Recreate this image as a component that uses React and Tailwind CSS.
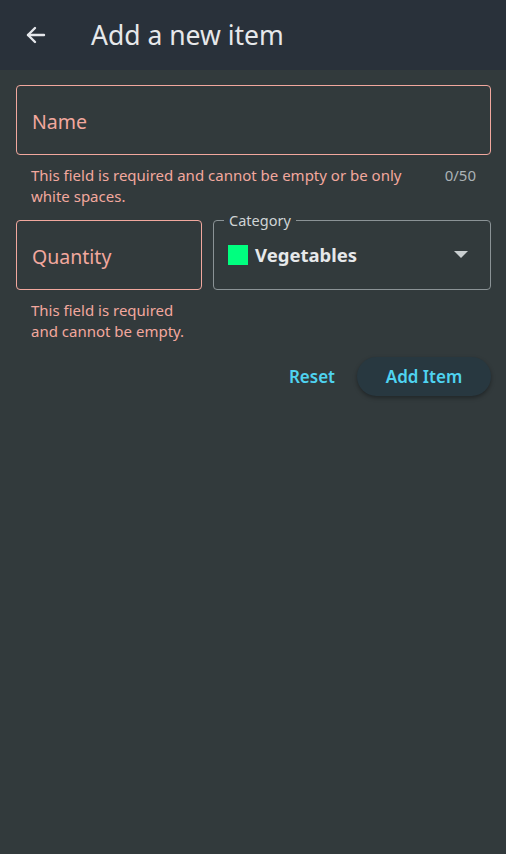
import React from "react";

function BackArrow() {
  return (
    <svg width="24" height="24" viewBox="0 0 24 24" fill="none" stroke="#e5e7eb" strokeWidth="2.4" strokeLinecap="round" strokeLinejoin="round">
      <path d="M20 12H4" />
      <path d="M11 5l-7 7 7 7" />
    </svg>
  );
}

export default function App() {
  return (
    <div
      className="min-h-screen w-full bg-[#323a3c] text-gray-100"
      style={{ fontFamily: '"Noto Sans", "Open Sans", sans-serif' }}
    >
      {/* Header */}
      <div className="h-[70px] bg-[#29313a] flex items-center px-6">
        <BackArrow />
        <h1 className="ml-[43px] pt-[2px] text-[26.5px] text-[#e6e8ea]">Add a new item</h1>
      </div>

      <div className="pl-4 pr-[15px] pt-[15px]">
        {/* Name */}
        <div className="h-[70px] border border-[#f2a89e] rounded-[4px] flex items-center px-[15px] pt-[4px]">
          <span className="text-[19.5px] text-[#f2a89e]">Name</span>
        </div>
        <div className="flex justify-between pl-[15px] pr-[15px] pt-[10px]">
          <p className="text-[15px] leading-[21px] text-[#f2a89e] max-w-[395px]">
            This field is required and cannot be empty or be only white spaces.
          </p>
          <span className="text-[15px] leading-[21px] text-[#aab2b6]">0/50</span>
        </div>

        {/* Quantity + Category */}
        <div className="flex gap-[11px] mt-[13px]">
          <div className="w-[186px] shrink-0">
            <div className="h-[70px] border border-[#f2a89e] rounded-[4px] flex items-center px-[15px] pt-[4px]">
              <span className="text-[19.5px] text-[#f2a89e]">Quantity</span>
            </div>
            <p className="pl-[15px] pr-[4px] pt-[10px] text-[15px] leading-[21px] text-[#f2a89e]">
              This field is required and cannot be empty.
            </p>
          </div>
          <div className="flex-1 relative h-[70px] border border-[#8b9396] rounded-[4px] flex items-center pl-[14px] pr-[22px]">
            <span className="absolute -top-[11px] left-[10px] px-[5px] bg-[#323a3c] text-[14.5px] leading-[20px] text-[#cfd4d6]">
              Category
            </span>
            <span className="w-[20px] h-[20px] bg-[#00ff7f] shrink-0" />
            <span className="ml-[7px] text-[18.5px] font-bold text-[#e6e8ea]">Vegetables</span>
            <svg className="ml-auto" width="14" height="8" viewBox="0 0 14 8">
              <path d="M0 0h14L7 7z" fill="#c9ced0" />
            </svg>
          </div>
        </div>

        {/* Actions */}
        <div className="flex justify-end items-center mt-[15px]">
          <button className="text-[17px] font-semibold text-[#4fd3f0] mr-[22px]">Reset</button>
          <button className="w-[134px] h-[39px] rounded-full bg-[#283840] text-[17px] font-semibold text-[#4fd3f0] shadow-[0_2px_4px_rgba(0,0,0,0.35)]">
            Add Item
          </button>
        </div>
      </div>
    </div>
  );
}
